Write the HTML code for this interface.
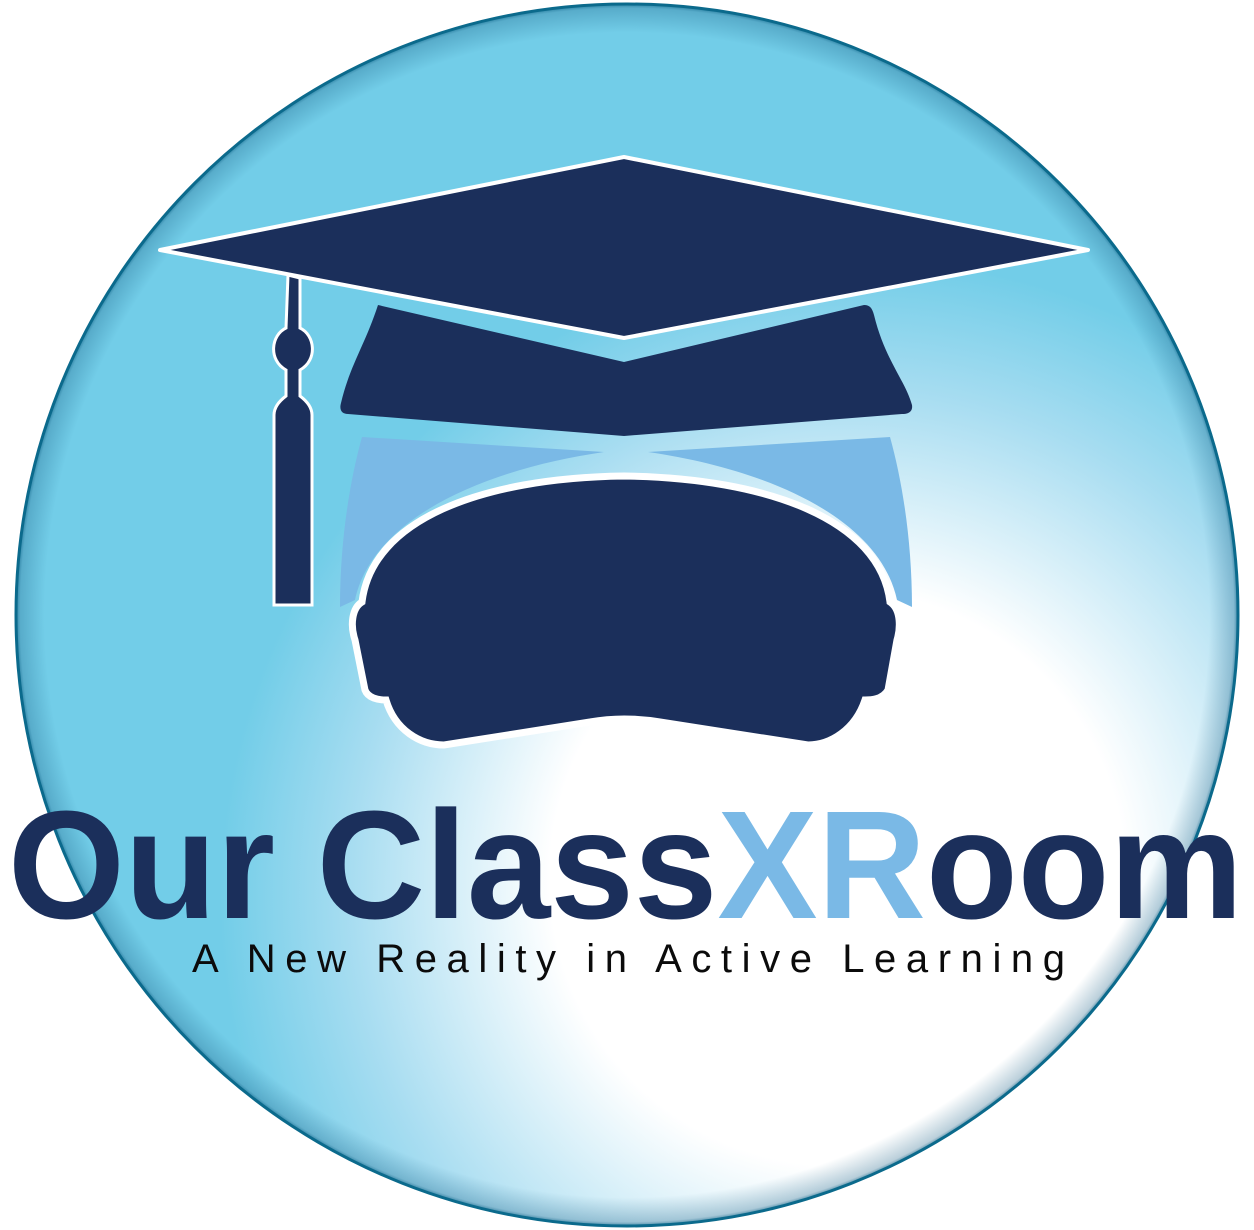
<!DOCTYPE html>
<html><head><meta charset="utf-8"><style>
html,body{margin:0;padding:0;background:#fff;width:1254px;height:1230px;overflow:hidden}
svg{display:block}
</style></head><body>
<svg width="1254" height="1230" viewBox="0 0 1254 1230" xmlns="http://www.w3.org/2000/svg">
<defs>
<radialGradient id="bg" cx="860" cy="900" r="640" fx="820" fy="860" gradientUnits="userSpaceOnUse">
<stop offset="0" stop-color="#ffffff"/>
<stop offset="0.45" stop-color="#ffffff"/>
<stop offset="0.78" stop-color="#a8ddf1"/>
<stop offset="1" stop-color="#72cde8"/>
</radialGradient>
<radialGradient id="edge" cx="627" cy="615" r="613" gradientUnits="userSpaceOnUse">
<stop offset="0.95" stop-color="#1a5f85" stop-opacity="0"/>
<stop offset="0.99" stop-color="#1a5f85" stop-opacity="0.3"/>
<stop offset="1" stop-color="#0b6a8c" stop-opacity="0.9"/>
</radialGradient>
</defs>
<circle cx="627" cy="615" r="612" fill="url(#bg)"/>
<circle cx="627" cy="615" r="612" fill="url(#edge)"/>
<circle cx="627" cy="615" r="611" fill="none" stroke="#0b6a8c" stroke-width="3"/>

<path d="M362,437 L604,452 C480,470 372,520 355,600 L340,607 C340,540 350,480 362,437 Z" fill="#7ab9e6"/>
<path d="M890,437 L648,452 C772,470 880,520 897,600 L912,607 C912,540 902,480 890,437 Z" fill="#7ab9e6"/>

<path d="M362,602 C372,520 480,478 624,476 C768,478 880,520 890,602 C902,610 900,630 897,640 L888,690 C882,700 870,700 865,700 C855,730 830,745 808,745 L660,722 C636,718 612,718 590,722 L444,745 C420,745 395,730 386,700 C378,700 368,698 365,690 L355,640 C350,625 352,608 362,602 Z" fill="#1b2f5b" stroke="#fff" stroke-width="7"/>

<path d="M378,305 L624,362 L864,305 C870,305 872,308 874,315 C885,360 905,380 912,405 C913,412 908,414 902,414 L624,436 L348,414 C342,414 339,410 341,403 C350,365 365,345 378,305 Z" fill="#1b2f5b"/>

<path d="M160,250 L624,157 L1088,250 L624,338 Z" fill="#1b2f5b" stroke="#fff" stroke-width="4" stroke-linejoin="round"/>

<path d="M288,275 L300,278 L300,328 C315,335 318,360 300,370 L300,396 C308,402 312,408 312,415 L312,605 L274,605 L274,415 C274,408 278,402 286,396 L286,370 C268,360 271,335 286,328 Z" fill="#1b2f5b" stroke="#fff" stroke-width="3"/>

<text x="8" y="918" textLength="1235" lengthAdjust="spacingAndGlyphs" font-family="Liberation Sans, sans-serif" font-weight="bold" font-size="154" fill="#1b2f5b">Our Class<tspan fill="#7ab9e6">XR</tspan>oom</text>
<text x="192" y="972" textLength="873" lengthAdjust="spacing" font-family="Liberation Sans, sans-serif" font-size="40" fill="#0b0b0b">A New Reality in Active Learning</text>
</svg>
</body></html>
